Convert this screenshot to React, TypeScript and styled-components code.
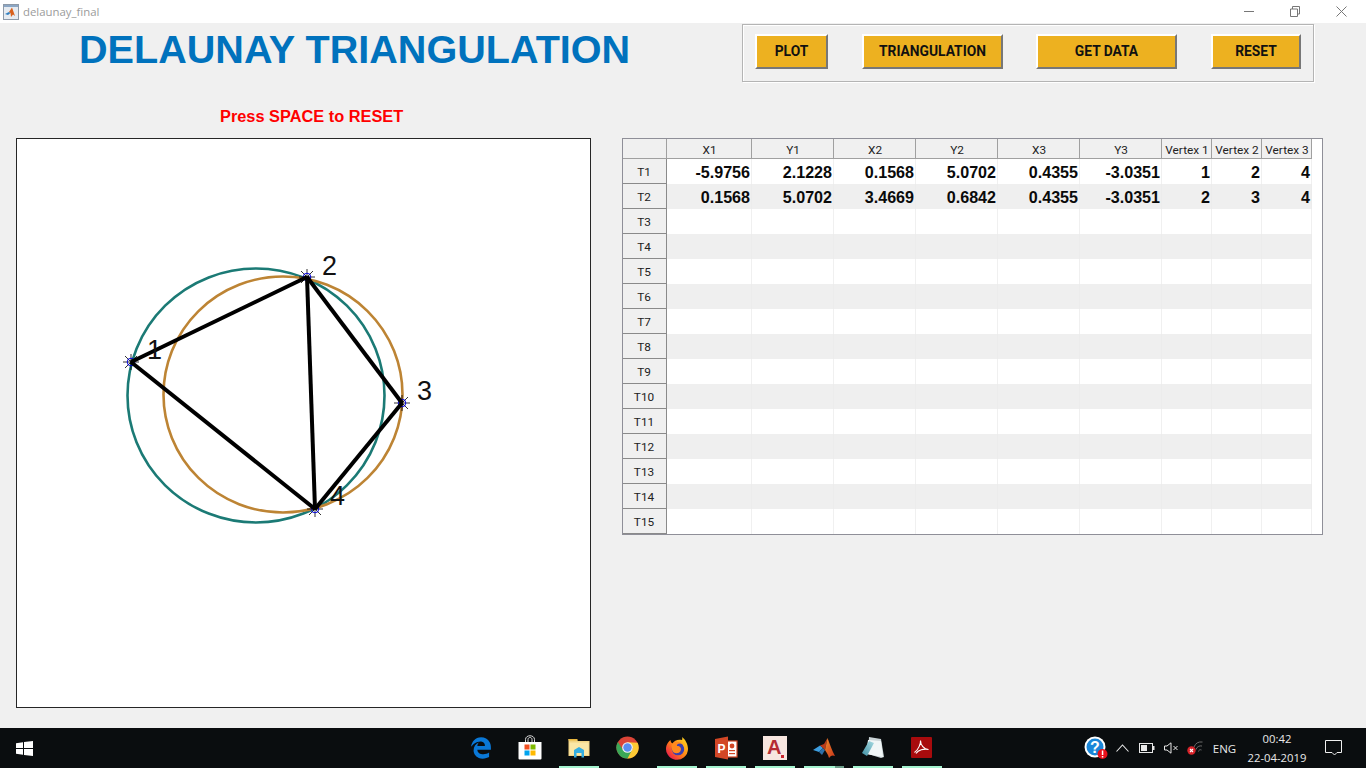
import React from 'react';
import styled, { createGlobalStyle } from 'styled-components';
import { FaEdgeLegacy } from 'react-icons/fa';

const GlobalStyle = createGlobalStyle`
    html, body {
        margin: 0;
        padding: 0;
        height: 100%;
        overflow: hidden;
        background: #f0f0f0;
        font-family: "Liberation Sans", Arial, sans-serif;
    }
    * {
        box-sizing: border-box;
    }
`;

const columns = [
    { name: 'X1', width: 85 },
    { name: 'Y1', width: 82 },
    { name: 'X2', width: 82 },
    { name: 'Y2', width: 82 },
    { name: 'X3', width: 82 },
    { name: 'Y3', width: 82 },
    { name: 'Vertex 1', width: 50 },
    { name: 'Vertex 2', width: 50 },
    { name: 'Vertex 3', width: 50 },
];

const rowData: Record<number, string[]> = {
    1: ['-5.9756', '2.1228', '0.1568', '5.0702', '0.4355', '-3.0351', '1', '2', '4'],
    2: ['0.1568', '5.0702', '3.4669', '0.6842', '0.4355', '-3.0351', '2', '3', '4'],
};

const rowNumbers = Array.from({ length: 15 }, (_, i) => i + 1);
const buttons = [
    { label: 'PLOT', width: 73, gap: 0 },
    { label: 'TRIANGULATION', width: 141, gap: 34 },
    { label: 'GET DATA', width: 141, gap: 33 },
    { label: 'RESET', width: 90, gap: 34 },
];

const Screen = styled.div`
    width: 1366px;
    height: 768px;
    display: flex;
    flex-direction: column;
    background: #f0f0f0;
    overflow: hidden;
`;

const TitleBar = styled.header`
    height: 23px;
    flex: none;
    background: #fff;
    display: flex;
    align-items: center;
    padding-left: 3px;
`;

const WindowName = styled.span`
    margin-left: 4px;
    font: 11.4px "Open Sans", sans-serif;
    color: #9b9b9b;
`;

const WindowControls = styled.div`
    margin-left: auto;
    display: flex;
    padding-right: 2px;
`;

const WindowControl = styled.div`
    width: 46px;
    height: 23px;
    display: flex;
    align-items: center;
    justify-content: center;
`;

const Workspace = styled.main`
    flex: 1;
    min-height: 0;
    display: flex;
    flex-direction: column;
`;

const HeaderRow = styled.div`
    height: 60px;
    display: flex;
    padding: 1px 0 0 79px;
`;

const Heading = styled.h1`
    margin: 0;
    width: 663px;
    font: bold 39.6px/50px "Liberation Sans", Arial, sans-serif;
    color: #0072bd;
    white-space: nowrap;
`;

const ButtonPanel = styled.div`
    width: 572px;
    height: 58px;
    display: flex;
    align-items: flex-start;
    padding: 9px 0 0 12px;
    border: 1px solid #b4b4b4;
    box-shadow: inset 1px 1px 0 #fff, 1px 1px 0 #fff;
`;

const PanelButton = styled.button<{ $width: number; $gap: number }>`
    width: ${({ $width }) => $width}px;
    height: 35px;
    margin-left: ${({ $gap }) => $gap}px;
    padding: 0 0 1px;
    background: #edb120;
    border: 2px solid;
    border-color: #fff #777 #777 #fff;
    font: bold 13.8px Roboto, sans-serif;
    color: #111;
`;

const PlotRow = styled.div`
    flex: 1;
    display: flex;
    padding: 0 0 20px 16px;
`;

const PlotColumn = styled.section`
    width: 575px;
    display: flex;
    flex-direction: column;
`;

const PressLabel = styled.div`
    height: 55px;
    padding: 23px 0 0 204px;
    font: bold 16.35px/20px "Liberation Sans", Arial, sans-serif;
    color: #ff0000;
    white-space: nowrap;
`;

const Axes = styled.div`
    width: 575px;
    height: 570px;
    background: #fff;
    border: 1px solid #262626;
`;

const TablePane = styled.section`
    margin: 55px 0 0 31px;
    width: 701px;
    height: 397px;
    background: #fff;
    border: 1px solid #8f8f98;
`;

const TableGrid = styled.div`
    display: grid;
    width: 689px;
    grid-template-columns: 44px ${columns.map(c => `${c.width}px`).join(' ')};
    grid-template-rows: 20px repeat(15, 25px);
`;

const ColumnHead = styled.div`
    display: flex;
    align-items: center;
    justify-content: center;
    padding: 2px 0 0 1px;
    background: #f0f0f0;
    border-right: 1px solid #a0a0a0;
    border-bottom: 1px solid #a0a0a0;
    font: 11.8px Roboto, sans-serif;
    color: #222;
    white-space: nowrap;
`;

const RowHead = styled.div`
    display: flex;
    align-items: center;
    justify-content: center;
    padding: 1px 1px 0 0;
    background: #f0f0f0;
    border-right: 1px solid #8a8a8a;
    border-bottom: 1px solid #8a8a8a;
    font: 11.8px Roboto, sans-serif;
    color: #222;
`;

const Cell = styled.div<{ $striped: boolean }>`
    display: flex;
    align-items: center;
    justify-content: flex-end;
    padding: 1px 1px 0 0;
    background: ${({ $striped }) => ($striped ? '#efefef' : '#fff')};
    border-right: 1px solid ${({ $striped }) => ($striped ? '#ececec' : '#f0f0f0')};
    font: bold 16.1px "Liberation Sans", Arial, sans-serif;
    color: #0a0a0a;
`;

const Taskbar = styled.footer`
    height: 40px;
    flex: none;
    display: flex;
    align-items: stretch;
    background: #0a0d0f;
    color: #fff;
`;

const StartButton = styled.div`
    width: 48px;
    display: flex;
    align-items: center;
    justify-content: center;
`;

const AppList = styled.div`
    display: flex;
    margin-left: 408px;
`;

const AppSlot = styled.div<{ $running?: boolean; $active?: boolean }>`
    position: relative;
    width: 49px;
    display: flex;
    align-items: center;
    justify-content: center;
    padding-bottom: 1px;

    &::after {
        content: '';
        display: ${({ $running }) => ($running ? 'block' : 'none')};
        position: absolute;
        left: 5px;
        right: 4px;
        bottom: 0;
        height: 2px;
        background: ${({ $active }) =>
            $active ? 'linear-gradient(90deg, #a4f3cf 78%, #6b9c88 78%)' : '#a4f3cf'};
    }
`;

const Tray = styled.div`
    margin-left: auto;
    display: flex;
    padding-right: 12px;
`;

const TraySlot = styled.div<{ $width: number }>`
    width: ${({ $width }) => $width}px;
    display: flex;
    align-items: center;
    justify-content: center;
`;

const TrayText = styled.span`
    font: 11.5px "Open Sans", sans-serif;
    color: #e8e8e8;
`;

const Clock = styled.div`
    font: 11.3px/19px "Open Sans", sans-serif;
    color: #e8e8e8;
    text-align: center;
    white-space: nowrap;
`;

const MatlabIcon = () => (
    <svg width="24" height="24" viewBox="0 0 24 24">
        <defs>
            <linearGradient id="matlabPeak" x1="0" y1="0" x2="1" y2="1">
                <stop offset="0" stopColor="#f08a2c" />
                <stop offset="1" stopColor="#c9341a" />
            </linearGradient>
        </defs>
        <path d="M1 14 L8 9.5 L11 12 L7 16 Z" fill="#3d9ee0" />
        <path d="M7 16 L11 12 L13 14 L10 19 Z" fill="#2d6fa8" />
        <path d="M8 9.5 L12 8 L15.5 2 L13 14 L11 12 Z" fill="#b93a1a" />
        <path d="M15.5 2 C17.5 7 20 15 23 20 C21 19 19 19 17 22 C16 18 14 16 13 14 Z" fill="url(#matlabPeak)" />
    </svg>
);

const TitleIcon = () => (
    <svg width="16" height="16" viewBox="0 0 16 16">
        <rect x="0.5" y="0.5" width="15" height="15" fill="#e6ebf1" stroke="#8d99a8" />
        <rect x="1" y="1" width="14" height="2" fill="#8ba6c4" />
        <path d="M2 10 L6 8 L7.5 9 L5 11 Z" fill="#2f7fc0" />
        <path d="M6 8 L9 3.5 L12 12 L10 10.5 L8 13 L7.5 9 Z" fill="#d9601c" />
    </svg>
);

const WindowsLogo = () => (
    <svg width="17" height="15" viewBox="0 0 17 15">
        <path d="M0 2.2 L7 1.2 V7 H0 Z M8 1 L17 0 V7 H8 Z M0 8 H7 V13.8 L0 12.8 Z M8 8 H17 V15 L8 14 Z" fill="#fff" />
    </svg>
);

const StoreIcon = () => (
    <svg width="24" height="25" viewBox="0 0 24 25">
        <path d="M7.5 8 V4.5 C7.5 -0.5 16.5 -0.5 16.5 4.5 V8 M10 8 V4.5 C10 1.8 14 1.8 14 4.5 V8" fill="none" stroke="#d8d8d8" strokeWidth="1" />
        <path d="M0.5 7 H23.5 V23.5 A1 1 0 0 1 22.5 24.5 H1.5 A1 1 0 0 1 0.5 23.5 Z" fill="#fff" />
        <rect x="6.5" y="9.5" width="5" height="5" fill="#f25022" />
        <rect x="12.5" y="9.5" width="5" height="5" fill="#7fba00" />
        <rect x="6.5" y="15.5" width="5" height="5" fill="#00a4ef" />
        <rect x="12.5" y="15.5" width="5" height="5" fill="#ffb900" />
    </svg>
);

const ExplorerIcon = () => (
    <svg width="22" height="20" viewBox="0 0 22 20">
        <path d="M0.5 1 H8 L10 3 H21.5 V18 H0.5 Z" fill="#f3d585" />
        <rect x="1.5" y="4.5" width="19" height="12.5" fill="#fbe7a6" />
        <rect x="0.5" y="1" width="9" height="1.5" fill="#e9b73f" />
        <path d="M6 19.5 V12 L11 9 L16 12 V19.5 H13.5 V15 H8.5 V19.5 Z" fill="#35aee2" />
    </svg>
);

const ChromeIcon = () => (
    <svg width="23" height="23" viewBox="-12 -12 24 24">
        <circle r="11.5" fill="#db4437" />
        <path d="M-10 -5.8 A11.5 11.5 0 0 0 0.5 11.5 L5.5 2 L-5 2 Z" fill="#3aa757" />
        <path d="M10.6 -5 A11.5 11.5 0 0 1 0 11.5 L5.5 1 L0 -5.5 Z" fill="#fcc934" />
        <circle r="5.6" fill="#f1f3f4" />
        <circle r="4.4" fill="#5a8df0" />
    </svg>
);

const FirefoxIcon = () => (
    <svg width="24" height="24" viewBox="0 0 24 24">
        <defs>
            <linearGradient id="foxRing" x1="0.1" y1="0.9" x2="0.9" y2="0.1">
                <stop offset="0" stopColor="#e8174f" />
                <stop offset="0.45" stopColor="#ff7a18" />
                <stop offset="1" stopColor="#ffd21f" />
            </linearGradient>
        </defs>
        <path d="M17 1 C20 3 23 8 23 13 A11 11 0 1 1 1.5 9.5 C2.5 7 4 5 5.5 4 C5.5 6 6.5 7 7.5 7.5 C9 4.5 13 3 17 4 C17.5 3 17.3 2 17 1 Z" fill="url(#foxRing)" />
        <circle cx="13" cy="13" r="6.3" fill="#3b3fb0" />
        <path d="M7 8 C10 5.5 14 5.5 16.5 7.5 C13 7 11.5 8.5 12 10 C15 10 17 12 15.5 15 C14 18 9 18 7.5 15 C6.5 13 6 10 7 8 Z" fill="#ff8a1e" />
        <path d="M16 6 C20 8 21.5 12 20 16 C19.5 12 18.5 9 16 6 Z" fill="#ffb31a" />
    </svg>
);

const PowerPointIcon = () => (
    <svg width="24" height="24" viewBox="0 0 24 24">
        <rect x="12" y="5" width="11" height="16" fill="#fff" stroke="#d24726" strokeWidth="1.2" />
        <circle cx="18" cy="10" r="2.4" fill="#d24726" />
        <rect x="15" y="14" width="6" height="1.2" fill="#d24726" />
        <rect x="15" y="17" width="6" height="1.2" fill="#d24726" />
        <path d="M1 3 L14 0.5 V23.5 L1 21 Z" fill="#d24726" />
        <text x="3.5" y="16.5" fontSize="12" fontWeight="bold" fontFamily="Liberation Sans" fill="#fff">P</text>
    </svg>
);

const AutocadIcon = () => (
    <svg width="24" height="24" viewBox="0 0 24 24">
        <rect width="24" height="24" fill="#f7e6e0" />
        <text x="4" y="18" fontSize="20" fontWeight="bold" fontFamily="Liberation Sans" fill="#b52b33">A</text>
        <rect x="18" y="19" width="3" height="3" fill="#c9252d" />
    </svg>
);

const NotesIcon = () => (
    <svg width="24" height="24" viewBox="0 0 24 24">
        <defs>
            <linearGradient id="notesFold" x1="0" y1="1" x2="1" y2="0">
                <stop offset="0" stopColor="#3f8fa3" />
                <stop offset="1" stopColor="#a8dbe3" />
            </linearGradient>
        </defs>
        <path d="M8 1 L20 3 L23 21 L20 22 L7 18 Z" fill="#c9d3d6" />
        <path d="M7 4 L20 5 L22 21 L5 18 Z" fill="#f1f6f7" />
        <path d="M1 17 L8 5 L13 7 L6 20 Z" fill="url(#notesFold)" />
    </svg>
);

const AcrobatIcon = () => (
    <svg width="21" height="21" viewBox="0 0 21 21">
        <rect width="21" height="21" rx="1" fill="#a80b0d" />
        <path d="M3.5 15.5 C7 13 10 7 9.5 3.5 C9.5 8 13 12.5 17.5 12.5 C13 11.5 7 13 5 16.5" fill="none" stroke="#fff" strokeWidth="1.1" />
    </svg>
);

const HelpIcon = () => (
    <svg width="24" height="24" viewBox="0 0 24 24">
        <circle cx="11" cy="11" r="10.5" fill="#fff" />
        <circle cx="11" cy="11" r="8.5" fill="#1a86d8" />
        <text x="11" y="16.5" textAnchor="middle" fontSize="16" fontWeight="bold" fontFamily="Liberation Sans" fill="#fff">?</text>
        <circle cx="18.5" cy="18" r="5" fill="#e8111b" />
        <rect x="17.8" y="14.5" width="1.5" height="4.5" fill="#fff" />
        <rect x="17.8" y="20" width="1.5" height="1.5" fill="#fff" />
    </svg>
);

const ChevronIcon = () => (
    <svg width="13" height="8" viewBox="0 0 13 8">
        <path d="M0.5 7.5 L6.5 1 L12.5 7.5" fill="none" stroke="#e8e8e8" strokeWidth="1.1" />
    </svg>
);

const BatteryIcon = () => (
    <svg width="16" height="10" viewBox="0 0 16 10">
        <rect x="0.5" y="0.5" width="13" height="9" fill="none" stroke="#e8e8e8" />
        <rect x="2" y="2" width="6" height="6" fill="#e8e8e8" />
        <rect x="14" y="3" width="1.5" height="4" fill="#e8e8e8" />
    </svg>
);

const SpeakerIcon = () => (
    <svg width="15" height="12" viewBox="0 0 15 12">
        <path d="M0.5 4 H3 L7 0.8 V11.2 L3 8 H0.5 Z" fill="none" stroke="#e8e8e8" />
        <path d="M9.5 4 L13.5 8 M13.5 4 L9.5 8" stroke="#e8e8e8" strokeWidth="1" />
    </svg>
);

const WifiIcon = () => (
    <svg width="16" height="14" viewBox="0 0 16 14">
        <path d="M7 6 A8 8 0 0 1 15.5 1 M9 8.5 A5 5 0 0 1 15 5 M11.5 10.5 A2 2 0 0 1 14.5 9" fill="none" stroke="#6b6b6b" strokeWidth="1" />
        <circle cx="4.5" cy="9.5" r="4.2" fill="#d8232a" />
        <path d="M3 8 L6 11 M6 8 L3 11" stroke="#fff" strokeWidth="1.1" />
    </svg>
);

const NotificationIcon = () => (
    <svg width="17" height="16" viewBox="0 0 17 16">
        <path d="M0.5 0.5 H16.5 V12.5 H12 L9.5 15 L7 12.5 H0.5 Z" fill="none" stroke="#f0f0f0" />
    </svg>
);

const points = [
    { id: '1', x: 114, y: 223, lx: 130, ly: 220 },
    { id: '2', x: 290, y: 138, lx: 305, ly: 136 },
    { id: '3', x: 385, y: 264, lx: 400, ly: 261 },
    { id: '4', x: 298, y: 370, lx: 313, ly: 366 },
];

const edges = [[0, 1], [1, 2], [2, 3], [3, 0], [1, 3]];

const Marker: React.FC<{ x: number; y: number }> = ({ x, y }) => (
    <g>
        <path
            d={`M${x - 8} ${y} H${x + 8} M${x} ${y - 8} V${y + 8} M${x - 6} ${y - 6} L${x + 6} ${y + 6} M${x - 6} ${y + 6} L${x + 6} ${y - 6}`}
            stroke="#000"
            strokeWidth="0.8"
        />
        <circle cx={x} cy={y} r="3.8" fill="none" stroke="#0000e0" strokeWidth="1" />
    </g>
);

const TrianglePlot = () => (
    <svg width="573" height="568" viewBox="0 0 573 568">
        <ellipse cx="239" cy="256.5" rx="128.5" ry="127" fill="none" stroke="#1b7a75" strokeWidth="2.6" />
        <ellipse cx="266" cy="255.5" rx="119.5" ry="118" fill="none" stroke="#bd8434" strokeWidth="2.6" />
        {points.map(p => <Marker key={p.id} x={p.x} y={p.y} />)}
        {edges.map(([a, b]) => (
            <line
                key={`${a}-${b}`}
                x1={points[a].x}
                y1={points[a].y}
                x2={points[b].x}
                y2={points[b].y}
                stroke="#000"
                strokeWidth="4"
            />
        ))}
        {points.map(p => (
            <text key={p.id} x={p.lx} y={p.ly} fontSize="27" fontFamily="Liberation Sans" fill="#111">
                {p.id}
            </text>
        ))}
    </svg>
);

const App: React.FC = () => (
    <Screen>
        <GlobalStyle />
        <TitleBar>
            <TitleIcon />
            <WindowName>delaunay_final</WindowName>
            <WindowControls>
                <WindowControl>
                    <svg width="10" height="1"><rect width="10" height="1" fill="#777" /></svg>
                </WindowControl>
                <WindowControl>
                    <svg width="10" height="11" viewBox="0 0 10 11">
                        <path d="M0.5 3 H7.5 V10.5 H0.5 Z M2.5 3 V0.5 H9.5 V8 H7.5" fill="none" stroke="#777" />
                    </svg>
                </WindowControl>
                <WindowControl>
                    <svg width="11" height="11" viewBox="0 0 11 11">
                        <path d="M0.5 0.5 L10.5 10.5 M10.5 0.5 L0.5 10.5" stroke="#777" />
                    </svg>
                </WindowControl>
            </WindowControls>
        </TitleBar>
        <Workspace>
            <HeaderRow>
                <Heading>DELAUNAY TRIANGULATION</Heading>
                <ButtonPanel>
                    {buttons.map(b => (
                        <PanelButton key={b.label} type="button" $width={b.width} $gap={b.gap}>
                            {b.label}
                        </PanelButton>
                    ))}
                </ButtonPanel>
            </HeaderRow>
            <PlotRow>
                <PlotColumn>
                    <PressLabel>Press SPACE to RESET</PressLabel>
                    <Axes>
                        <TrianglePlot />
                    </Axes>
                </PlotColumn>
                <TablePane>
                    <TableGrid>
                        <ColumnHead />
                        {columns.map(c => <ColumnHead key={c.name}>{c.name}</ColumnHead>)}
                        {rowNumbers.map(n => (
                            <React.Fragment key={n}>
                                <RowHead>{`T${n}`}</RowHead>
                                {columns.map((c, i) => (
                                    <Cell key={c.name} $striped={n % 2 === 0}>
                                        {rowData[n] ? rowData[n][i] : ''}
                                    </Cell>
                                ))}
                            </React.Fragment>
                        ))}
                    </TableGrid>
                </TablePane>
            </PlotRow>
        </Workspace>
        <Taskbar>
            <StartButton><WindowsLogo /></StartButton>
            <AppList>
                <AppSlot><FaEdgeLegacy size={22} color="#0a78d7" /></AppSlot>
                <AppSlot><StoreIcon /></AppSlot>
                <AppSlot $running><ExplorerIcon /></AppSlot>
                <AppSlot><ChromeIcon /></AppSlot>
                <AppSlot $running><FirefoxIcon /></AppSlot>
                <AppSlot $running><PowerPointIcon /></AppSlot>
                <AppSlot $running><AutocadIcon /></AppSlot>
                <AppSlot $running $active><MatlabIcon /></AppSlot>
                <AppSlot $running><NotesIcon /></AppSlot>
                <AppSlot $running><AcrobatIcon /></AppSlot>
            </AppList>
            <Tray>
                <TraySlot $width={28}><HelpIcon /></TraySlot>
                <TraySlot $width={24}><ChevronIcon /></TraySlot>
                <TraySlot $width={25}><BatteryIcon /></TraySlot>
                <TraySlot $width={24}><SpeakerIcon /></TraySlot>
                <TraySlot $width={24}><WifiIcon /></TraySlot>
                <TraySlot $width={35}><TrayText>ENG</TrayText></TraySlot>
                <TraySlot $width={70}>
                    <Clock>
                        00:42
                        <br />
                        22-04-2019
                    </Clock>
                </TraySlot>
                <TraySlot $width={42}><NotificationIcon /></TraySlot>
            </Tray>
        </Taskbar>
    </Screen>
);

export default App;
